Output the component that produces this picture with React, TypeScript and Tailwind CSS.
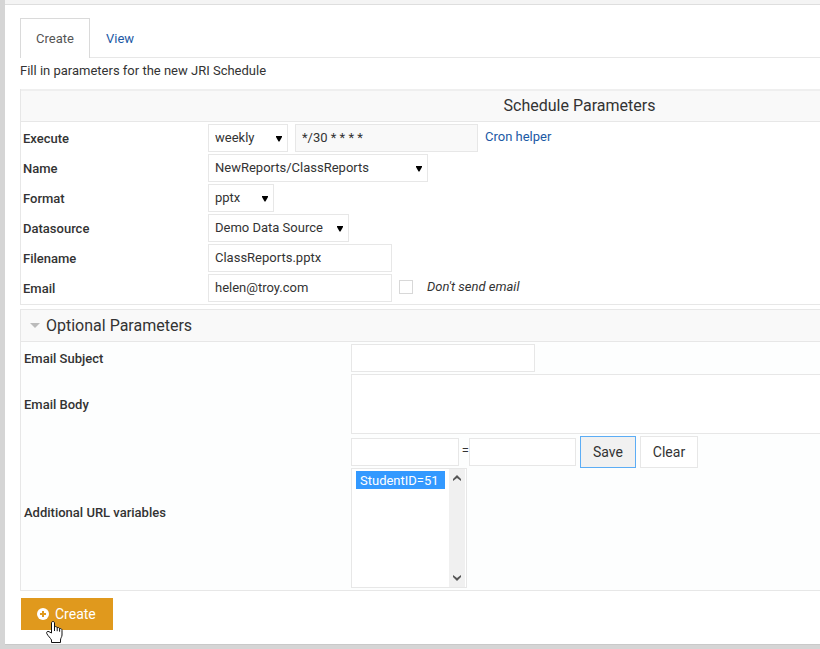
import type { ReactNode } from "react";

const control = "block h-7 border border-[#e7e7e7] px-1.5 text-[13px] leading-4 text-[#333] outline-none";
const textField = `${control} pb-0.5`;

function Select({ id, value, width }: { id: string; value: string; width: string }) {
  return (
    <div className={`relative ${width}`}>
      <select id={id} className={`${control} w-full appearance-none bg-white`} defaultValue={value}>
        <option>{value}</option>
      </select>
      <svg className="pointer-events-none absolute top-3 right-1.5 h-1.5 w-1.5" viewBox="0 0 6 6" aria-hidden="true">
        <path d="M0 0h6v1L3.500 5.500h-1L0 1z" fill="#000" />
      </svg>
    </div>
  );
}

function Row({ id, label, children }: { id: string; label: string; children: ReactNode }) {
  return (
    <div className="flex h-[30px] items-center">
      <label htmlFor={id} className="w-[187px] shrink-0 pt-0.5 pl-0.5 leading-5 font-medium">
        {label}
      </label>
      <div className="flex items-center gap-[7px]">{children}</div>
    </div>
  );
}

function OptionalRow({ id, label, children }: { id: string; label: string; children: ReactNode }) {
  return (
    <div className="flex items-center">
      <label htmlFor={id} className="w-[330px] shrink-0 pt-0.5 pl-[3px] leading-5 font-medium">
        {label}
      </label>
      <div className="min-w-0 flex-1">{children}</div>
    </div>
  );
}

export default function App() {
  return (
    <div className="overflow-hidden bg-[#d5d5d5] pb-[5px] pl-[5px] font-[Roboto,sans-serif] text-[13px] text-[#333]">
      <div className="h-[5px] border-b border-[#dedede] bg-[#f4f4f4]" />
      <main className="border-b border-[#c9c9c9] bg-white pt-[13px] pb-3.5 pl-[15px]">
        <nav className="flex h-10 items-stretch">
          <a href="#create" className="flex w-[70px] items-center justify-center border border-b-0 border-[#dadada] text-[#555]">
            Create
          </a>
          <a href="#view" className="flex flex-1 items-center border-b border-[#e7e7e7] pt-0.5 pl-4 text-[#1c59a5]">
            View
          </a>
        </nav>
        <p className="pt-[3px] leading-5">Fill in parameters for the new JRI Schedule</p>

        <section className="mt-2 border-b border-l border-[#e7e7e7]">
          <h2 className="h-[33px] border-t-2 border-b border-t-[#efefef] border-b-[#e7e7e7] bg-[#f9f9f9] pl-[318px] text-center text-base leading-[30px]">
            Schedule Parameters
          </h2>
          <div className="py-px">
            <Row id="execute" label="Execute">
              <Select id="execute" value="weekly" width="w-20" />
              <input aria-label="Cron expression" className={`${textField} w-[183px] bg-[#f9f9f9]`} defaultValue="*/30 * * * *" />
              <a href="#cron" className="pb-0.5 text-[#1c59a5]">
                Cron helper
              </a>
            </Row>
            <Row id="name" label="Name">
              <Select id="name" value="NewReports/ClassReports" width="w-[220px]" />
            </Row>
            <Row id="format" label="Format">
              <Select id="format" value="pptx" width="w-[66px]" />
            </Row>
            <Row id="datasource" label="Datasource">
              <Select id="datasource" value="Demo Data Source" width="w-[141px]" />
            </Row>
            <Row id="filename" label="Filename">
              <input id="filename" className={`${textField} w-[184px] bg-white`} defaultValue="ClassReports.pptx" />
            </Row>
            <Row id="email" label="Email">
              <input id="email" className={`${textField} w-[184px] bg-white`} defaultValue="helen@troy.com" />
              <label className="flex items-center gap-3.5 pb-0.5 italic">
                <input type="checkbox" className="h-3.5 w-3.5 appearance-none border border-[#d8d8d8] bg-white" />
                Don't send email
              </label>
            </Row>
          </div>
        </section>

        <section className="mt-1 border-t border-b border-l border-[#e7e7e7] bg-[#fdfefe]">
          <h2 className="flex h-8 items-center border-b border-[#e7e7e7] bg-[#f9f9f9] pl-[9px] text-base">
            <svg className="mr-1.5 h-[5px] w-2.5" viewBox="0 0 10 5" aria-hidden="true">
              <path d="M0 0h10L5 5z" fill="#bbb" />
            </svg>
            Optional Parameters
          </h2>
          <div className="flex flex-col gap-0.5 py-0.5">
            <OptionalRow id="subject" label="Email Subject">
              <input id="subject" className={`${textField} w-[184px] bg-white`} />
            </OptionalRow>
            <OptionalRow id="body" label="Email Body">
              <textarea id="body" className="block h-[60px] w-full resize-none border border-r-0 border-[#e7e7e7] bg-white outline-none" />
            </OptionalRow>
            <OptionalRow id="variables" label="Additional URL variables">
              <div className="flex items-center">
                <input aria-label="Variable name" className={`${textField} w-[108px] bg-white`} />
                <span className="w-2.5 pb-0.5 text-right">=</span>
                <input aria-label="Variable value" className={`${textField} w-[107px] bg-white`} />
                <button type="button" className="ml-1 h-8 w-14 border border-[#5cadf5] bg-[#f1f1f1] text-sm">
                  Save
                </button>
                <button type="button" className="ml-1 h-8 w-[58px] border border-[#e7e7e7] bg-white text-sm">
                  Clear
                </button>
              </div>
              <div className="flex h-[120px] w-[116px] border border-[#e7e7e7] bg-white">
                <select
                  id="variables"
                  multiple
                  defaultValue={["StudentID=51"]}
                  className="h-full w-[97px] appearance-none overflow-hidden bg-white px-1 py-0.5 text-[13px] outline-none"
                >
                  <option className="h-[18px] min-h-0 bg-[linear-gradient(#3399ff,#3399ff)] px-1 pt-0.5 pb-0 leading-4 [-webkit-text-fill-color:white]">
                    StudentID=51
                  </option>
                </select>
                <div className="flex w-4 flex-col items-center justify-between bg-[#f0f0f0] py-1.5" aria-hidden="true">
                  <svg className="h-1.5 w-2" viewBox="0 0 8 6">
                    <path d="M4 0l4 4v2L4 3 0 6V4z" fill="#555" />
                  </svg>
                  <svg className="h-1.5 w-2" viewBox="0 0 8 6">
                    <path d="M4 6l4-4V0L4 3 0 0v2z" fill="#555" />
                  </svg>
                </div>
              </div>
            </OptionalRow>
          </div>
        </section>

        <div className="relative mt-[7px] ml-px w-[92px]">
          <button type="button" className="flex h-8 w-full items-center gap-1.5 bg-[#e0991d] pl-4 text-sm text-white">
            <svg className="h-3 w-3" viewBox="0 0 12 12" aria-hidden="true">
              <circle cx="6" cy="6" r="6" fill="#fff" />
              <path d="M5 3h2v2h2v2H7v2H5V7H3V5h2z" fill="#e0991d" />
            </svg>
            Create
          </button>
          <svg className="pointer-events-none absolute top-[23px] left-[25px] h-[22px] w-[17px]" viewBox="0 0 17 22" aria-hidden="true">
            <path
              d="M5.500 12V2c0-2 3-2 3 0v4c1-.8 2.400-.4 2.700.7 1-.5 2.200 0 2.400 1 1.300-.4 2.400.2 2.400 1.600V14c0 2-1.500 3-1.500 5v2.500h-9V19C4.500 17 2 15 .8 12.600 0 11 1.800 9.800 3 10.700z"
              fill="#fff"
              stroke="#111"
            />
            <path d="M8.500 6v4M11.200 6.700v3.500M13.600 7.700v3" stroke="#111" fill="none" />
          </svg>
        </div>
      </main>
    </div>
  );
}
